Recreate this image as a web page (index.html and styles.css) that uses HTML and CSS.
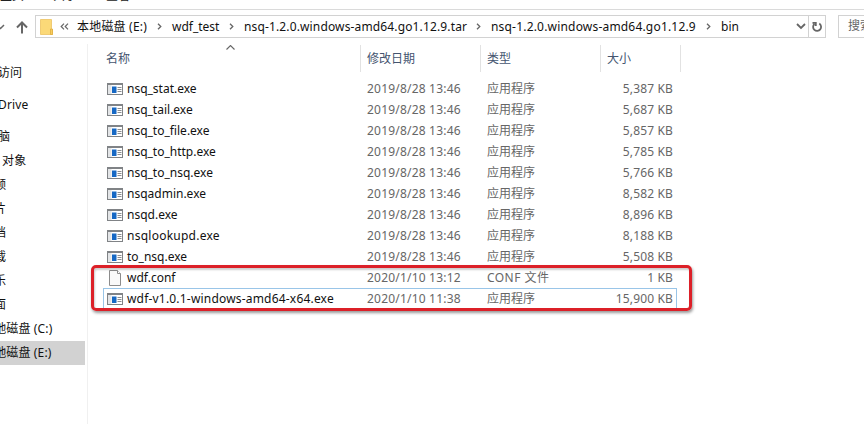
FILE: index.html
```html
<!DOCTYPE html>
<html lang="zh-CN">
<head>
<meta charset="utf-8">
<title>bin</title>
<link rel="stylesheet" href="styles.css">
</head>
<body>
<svg width="0" height="0" class="defs">
  <symbol id="exe" viewBox="0 0 16 12"><path fill="#808386" d="M0 0h16v12H0z"/><path fill="#fff" d="M1 2h14v9H1z"/><path fill="#e3e5e7" d="M1 2h3.500v9H1z"/><path fill="#1668c4" d="M5 3.500h4.500V10H5z"/><path stroke="#8a8d90" d="M10.500 4.500h4M10.500 6.500h4M10.500 8.500h4"/></symbol>
  <symbol id="doc" viewBox="0 0 16 16"><path fill="#f9f9f9" stroke="#8c8c8c" d="M2.500.5h8l3 3v12h-11z"/><path fill="#fff" stroke="#8c8c8c" d="M10.500.5v3h3"/></symbol>
  <symbol id="sep" viewBox="0 0 5 7"><path fill="none" stroke="#666" stroke-width="1.300" d="M1 .7l2.800 2.800L1 6.300"/></symbol>
</svg>
<div class="window">
  <nav class="tabs"><span>主页</span><span>共享</span><span>查看</span></nav>
  <header class="toolbar">
    <svg class="recent" width="5" height="6" viewBox="0 0 5 6"><path d="M-3 1l3.500 3.500L4 1"/></svg>
    <svg class="up" width="12" height="13" viewBox="0 0 12 13"><path d="M6 12.500V2M1 6.500l5-5 5 5"/></svg>
    <div class="address">
      <svg class="folder" width="13" height="16" viewBox="0 0 13 16"><path d="M.5.5h11v9l1 1v5H.5z"/><path d="M10.500 10h2v5.500h-2z"/></svg>
      <svg class="more" width="9" height="7" viewBox="0 0 9 7"><path d="M4 .7L1.200 3.500 4 6.300M8 .7L5.200 3.500 8 6.300"/></svg>
      <span class="crumb c1">本地磁盘 (E:)</span><svg class="sep"><use href="#sep"/></svg>
      <span class="crumb c2">wdf_test</span><svg class="sep"><use href="#sep"/></svg>
      <span class="crumb c3">nsq-1.2.0.windows-amd64.go1.12.9.tar</span><svg class="sep"><use href="#sep"/></svg>
      <span class="crumb c4">nsq-1.2.0.windows-amd64.go1.12.9</span><svg class="sep"><use href="#sep"/></svg>
      <span class="crumb c5">bin</span>
      <svg class="drop" width="10" height="7" viewBox="0 0 10 7"><path d="M1 1l4 4 4-4"/></svg>
      <div class="refresh"><svg width="12" height="12" viewBox="0 0 12 12"><path d="M8.300 2.600A4 4 0 1 1 3.400 3M1.500 1.800h3.300v3.300"/></svg></div>
    </div>
    <div class="search">搜索</div>
  </header>
  <div class="body">
    <aside class="tree">
      <div class="node root quick">快速访问</div>
      <div class="node root drive">OneDrive</div>
      <div class="node root">此电脑</div>
      <div class="node objects">3D 对象</div>
      <div class="node">视频</div>
      <div class="node">图片</div>
      <div class="node">文档</div>
      <div class="node">下载</div>
      <div class="node">音乐</div>
      <div class="node">桌面</div>
      <div class="node disk">本地磁盘 (C:)</div>
      <div class="node disk current">本地磁盘 (E:)</div>
    </aside>
    <main class="list">
      <div class="head">
        <div>名称<svg class="sort" width="9" height="5" viewBox="0 0 9 5"><path d="M.5 4.500l4-4 4 4"/></svg></div><div>修改日期</div><div>类型</div><div>大小</div>
      </div>
      <div class="row"><svg class="exe"><use href="#exe"/></svg><span>nsq_stat.exe</span><span>2019/8/28 13:46</span><span>应用程序</span><span>5,387 KB</span></div>
      <div class="row"><svg class="exe"><use href="#exe"/></svg><span>nsq_tail.exe</span><span>2019/8/28 13:46</span><span>应用程序</span><span>5,687 KB</span></div>
      <div class="row"><svg class="exe"><use href="#exe"/></svg><span>nsq_to_file.exe</span><span>2019/8/28 13:46</span><span>应用程序</span><span>5,857 KB</span></div>
      <div class="row"><svg class="exe"><use href="#exe"/></svg><span>nsq_to_http.exe</span><span>2019/8/28 13:46</span><span>应用程序</span><span>5,785 KB</span></div>
      <div class="row"><svg class="exe"><use href="#exe"/></svg><span>nsq_to_nsq.exe</span><span>2019/8/28 13:46</span><span>应用程序</span><span>5,766 KB</span></div>
      <div class="row"><svg class="exe"><use href="#exe"/></svg><span>nsqadmin.exe</span><span>2019/8/28 13:46</span><span>应用程序</span><span>8,582 KB</span></div>
      <div class="row"><svg class="exe"><use href="#exe"/></svg><span>nsqd.exe</span><span>2019/8/28 13:46</span><span>应用程序</span><span>8,896 KB</span></div>
      <div class="row"><svg class="exe"><use href="#exe"/></svg><span class="lookup">nsqlookupd.exe</span><span>2019/8/28 13:46</span><span>应用程序</span><span>8,188 KB</span></div>
      <div class="row"><svg class="exe"><use href="#exe"/></svg><span>to_nsq.exe</span><span>2019/8/28 13:46</span><span>应用程序</span><span>5,508 KB</span></div>
      <div class="row"><svg class="doc"><use href="#doc"/></svg><span>wdf.conf</span><span>2020/1/10 13:12</span><span class="conf">CONF 文件</span><span>1 KB</span></div>
      <div class="row focused"><svg class="exe"><use href="#exe"/></svg><span>wdf-v1.0.1-windows-amd64-x64.exe</span><span>2020/1/10 11:38</span><span>应用程序</span><span>15,900 KB</span></div>
      <div class="marker"></div>
    </main>
  </div>
</div>
</body>
</html>
```
FILE: styles.css
```css
* { box-sizing: border-box; }
body { margin: 0; background: #fff; color: #111; font: 12px/20px "Noto Sans", "Noto Sans CJK SC", sans-serif; }
.defs { position: absolute; }
.window { width: 864px; height: 424px; overflow: hidden; display: flex; flex-direction: column; white-space: nowrap; }
.window svg path { fill: none; stroke: #666; stroke-width: 1.5; }
.tabs { height: 10px; flex: none; border-bottom: 1px solid #dadada; display: flex; align-items: flex-end; gap: 29px; padding-bottom: 5px; padding-left: 0; line-height: 16px; overflow: hidden; color: #222; }
.toolbar { height: 34px; flex: none; display: flex; padding-top: 5px; }
.recent { margin-top: 9px; flex: none; }
.up { margin: 6px 0 0 11px; flex: none; }
.toolbar .up path { stroke-width: 2; }
.address { margin-left: 7px; width: 791px; height: 23px; border: 1px solid #d2d2d2; display: flex; align-items: center; flex: none; }
.window .folder path:first-child { fill: #fbd978; stroke: #e9bd56; stroke-width: .7; }
.window .folder path:last-child { fill: #f7cd60; stroke: #dca93a; stroke-width: .7; }
.folder { margin-left: 4px; flex: none; }
.more { margin: 0 8px 0 7px; flex: none; }
.window .more path { stroke-width: 1.2; }
.crumb { flex: none; line-height: 19px; padding-bottom: 1px; }
.c1 { width: 80px; letter-spacing: .2px; }
.c2 { width: 57px; }
.c3 { width: 232px; letter-spacing: .14px; }
.c4 { width: 215px; letter-spacing: .19px; }
.sep { width: 5px; height: 7px; flex: none; margin-right: 10px; }
.drop { margin-left: auto; margin-right: 2px; flex: none; }
.window .drop path, .window .refresh path { stroke-width: 1.8; }
.refresh { width: 17px; height: 21px; border-left: 1px solid #d2d2d2; display: grid; place-items: center; flex: none; }
.search { margin-left: 12px; width: 40px; height: 23px; flex: none; border: 1px solid #d2d2d2; padding-left: 9px; color: #666; }
.body { display: flex; flex: 1; }
.tree { width: 88px; flex: none; border-right: 1px solid #f0f0f0; padding-top: 17px; overflow: hidden; }
.node { height: 24px; line-height: 24px; width: 85px; text-indent: -18px; }
.root { text-indent: -26px; }
.drive { letter-spacing: .15px; }
.objects { letter-spacing: .4px; }
.disk { letter-spacing: .15px; }
.quick, .drive { margin-bottom: 8px; }
.current { background: #d2d2d2; }
.list { position: relative; padding-left: 15px; flex: 1; }
.head { display: grid; grid-template-columns: 258px 120px 120px 80px; height: 27px; margin-top: 1px; color: #44546f; }
.head div { border-right: 1px solid #e2e2e2; padding-left: 6px; line-height: 27px; position: relative; }
.head div:first-child { padding-left: 3px; }
.sort { position: absolute; left: 123px; top: 0; }
.window .sort path { stroke-width: 1.1; }
.row { display: grid; grid-template-columns: 24px 240px 120px 120px 66px; height: 21px; line-height: 21px; align-items: center; width: 574px; color: #666; }
.head + .row { margin-top: 6px; }
.row span:nth-child(2) { color: #111; }
.row .lookup { letter-spacing: .25px; }
.row span:nth-child(3) { letter-spacing: .2px; }
.row span:last-child { text-align: right; letter-spacing: .15px; }
.row .conf { letter-spacing: .45px; }
.exe { width: 16px; height: 12px; margin-left: 4px; }
.doc { width: 16px; height: 16px; margin-left: 4px; }
.focused { outline: 1px solid #99c5e8; outline-offset: -1px; }
.row.focused span:nth-child(2) { letter-spacing: .19px; }
.marker { position: absolute; left: 3px; top: 221px; width: 601px; height: 46px; border: 3px solid #dc2028; border-radius: 5px; box-shadow: 1px 2px 3px #0006, inset 1px 2px 2px #0003; }
```
